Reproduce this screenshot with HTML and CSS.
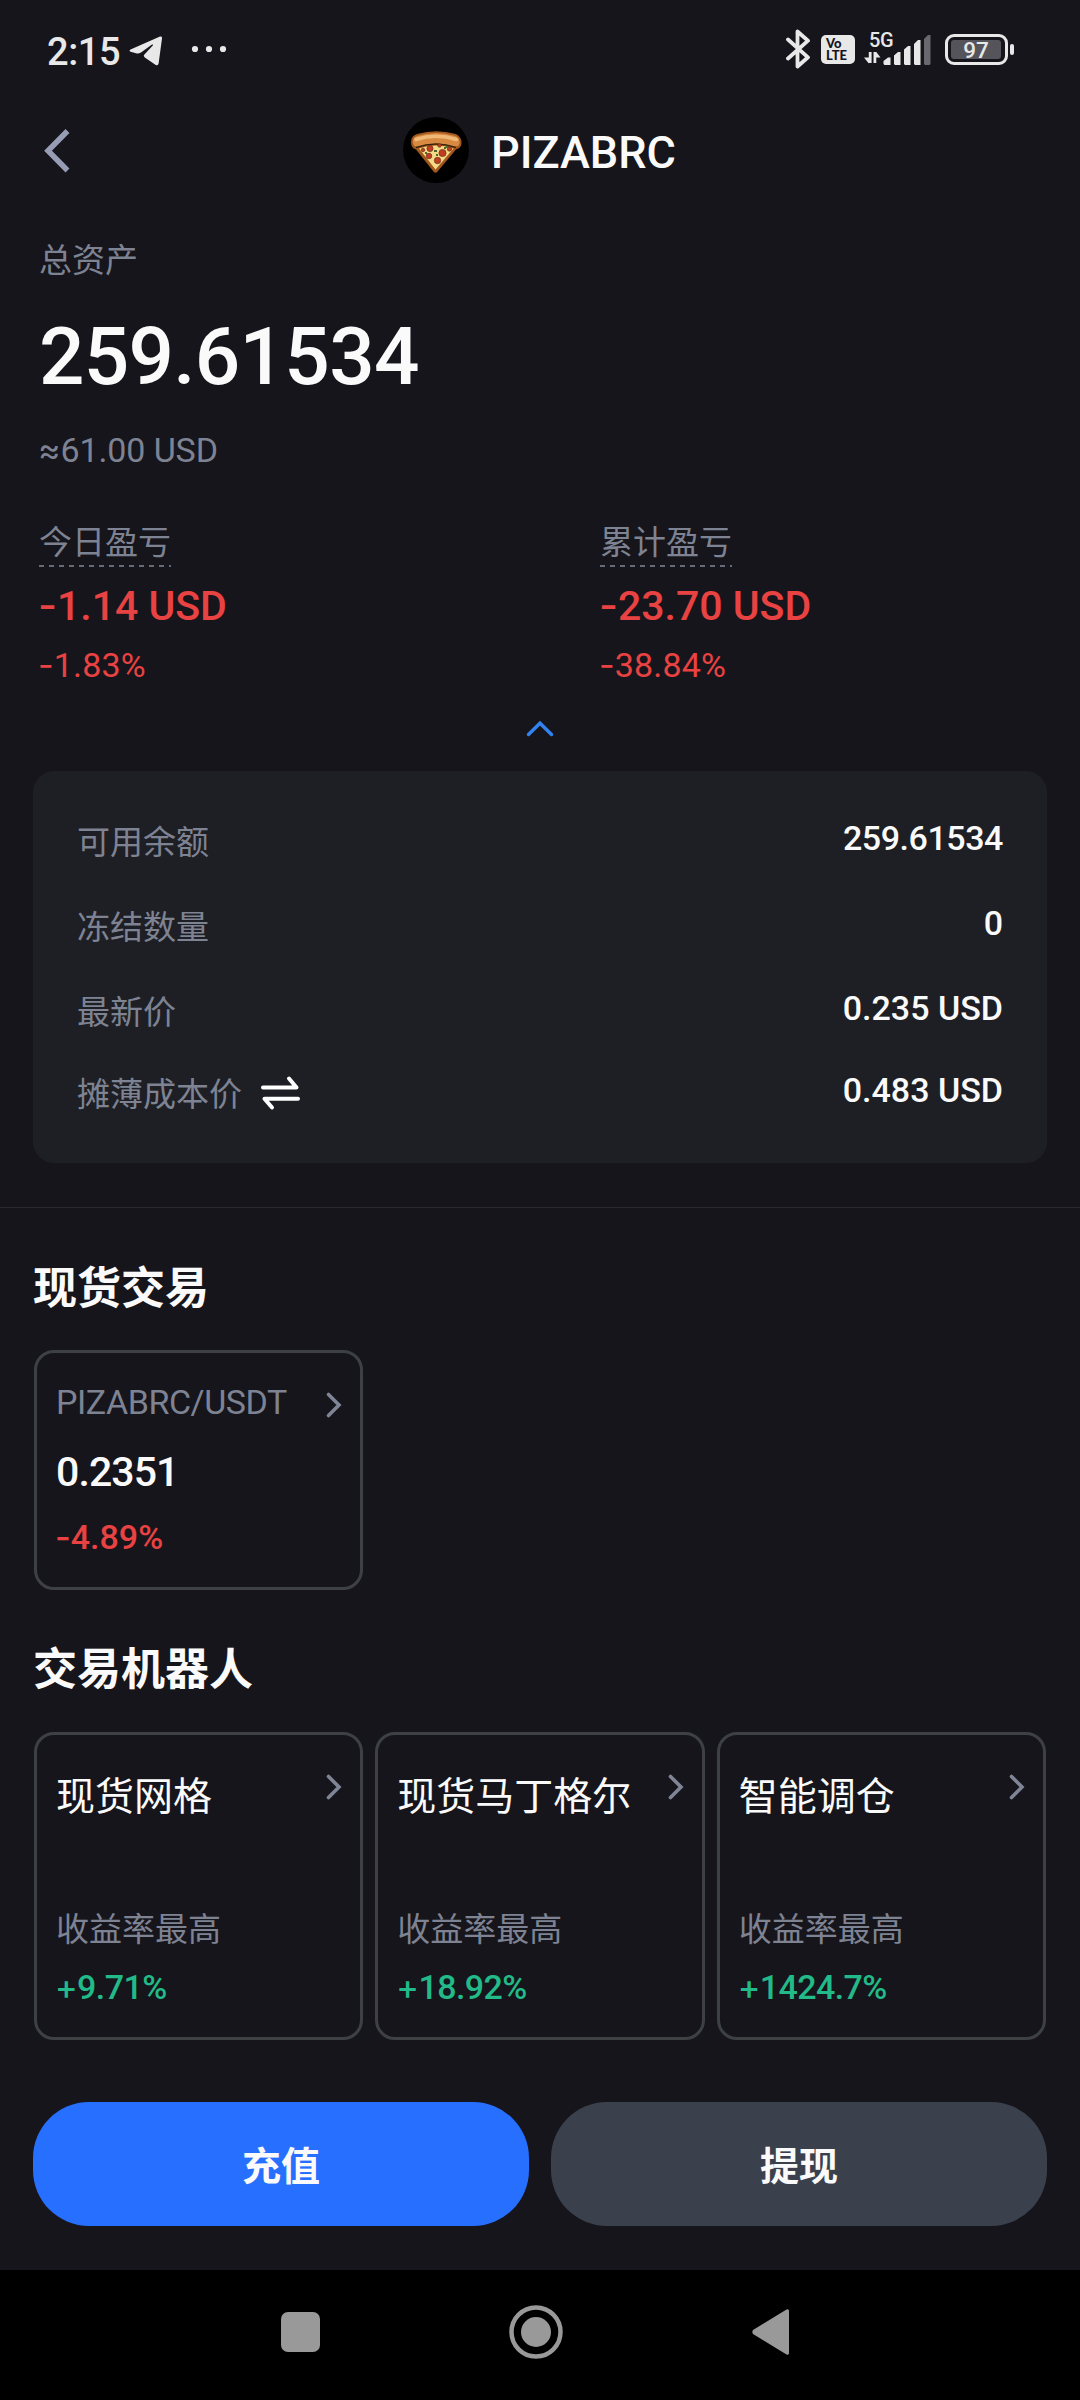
FILE: index.html
```html
<!DOCTYPE html>
<html lang="zh-CN">
<head>
<meta charset="utf-8">
<title>PIZABRC</title>
<link rel="stylesheet" href="styles.css">
</head>
<body>
<div class="screen">
  <div class="status">
    <span class="clock">2:15</span>
    <svg class="telegram" width="34" height="32" viewBox="0 0 34 32"><path d="M1.500 14.600 L31 1.600 Q33.300 1 33 3.400 L29.600 28.500 Q29 31.300 26.400 29.700 L15.800 22.400 Q14 21 15.400 19.500 L24 10.200 Q24.300 9 23 9.600 L12 17.400 Q9.500 19 7 18.200 L1.600 16.800 Q-.4 15.800 1.500 14.600Z"/></svg>
    <svg class="dots" width="36" height="8" viewBox="0 0 36 8"><circle cx="4" cy="4" r="3.100"/><circle cx="18" cy="4" r="3.100"/><circle cx="32" cy="4" r="3.100"/></svg>
    <div class="status-icons">
      <svg width="25" height="40" viewBox="0 0 25 40"><path d="M2 10.500 L22 28.300 L11.500 37.500 V2.500 L22 11.700 L2 29.500" fill="none" stroke="#e8e8e8" stroke-width="3.800" stroke-linejoin="round" stroke-linecap="round"/></svg>
      <div class="volte"><span class="vo">Vo</span><span>LTE</span></div>
      <svg class="signal" width="68" height="44" viewBox="0 -8 68 44">
        <text x="5" y="17" class="net">5G</text>
        <path d="M4.800 22 V33 H7.600 V22Z M0 27.500 L4.800 33.500 V27.500Z M9.500 22 H12.300 V33 H9.500Z M12.300 22 L16.500 27.500 H12.300Z"/>
        <path d="M19.500 34 V31 L24 27.500 H26.500 V35 H20.500Z M30 34 V25.500 L34 22 H36.500 V35 H31Z M40 34 V19.500 L44 16 H46.500 V35 H41Z M50 34 V14 L54 10 H56.500 V35 H51Z"/>
        <path class="dim" d="M60 34 V9 L64 5 H66.500 V34 L65.500 35 H61Z"/>
      </svg>
      <div class="battery"><span class="charge">97</span></div>
      <span class="nub"></span>
    </div>
  </div>

  <header class="header">
    <svg class="back" width="28" height="46" viewBox="0 0 28 46"><path d="M23.500 3 L4 22.800 L23.500 42.500" fill="none" stroke="#979db4" stroke-width="5.500"/></svg>
    <div class="coin">
      <svg width="66" height="66" viewBox="0 0 66 66">
        <circle cx="33" cy="33" r="33" fill="#000"/>
        <path d="M8 25 Q8 19 14 17 Q33 11.500 53 17 Q59 20 58.500 27 Q58 31 53 32.500 L34.500 54.500 Q32.500 57 30.500 54.500 L13 32.500 Q8 31 8 25Z" fill="#a2571c"/>
        <path d="M9.800 24.500 Q10 20 15 18.700 Q33 13.500 52 18.700 Q57 21 56.700 26 Q56 29.500 52 30 Q33 23.500 14.500 30 Q10 29.500 9.800 24.500Z" fill="#d88a43"/>
        <path d="M13 22.500 Q33 16 53.500 22.500" fill="none" stroke="#f0b978" stroke-width="3.500" stroke-linecap="round"/>
        <path d="M16 31.500 Q33 25.500 50.500 31.500 L32.500 52.500Z" fill="#f5da88"/>
        <path d="M13 30.500 Q33 23.500 53 30.500" fill="none" stroke="#38240c" stroke-width="1.400"/>
        <g fill="#bf3d20" stroke="#70301a" stroke-width=".7"><circle cx="27" cy="31.500" r="3.100"/><circle cx="39.500" cy="36" r="3.600"/><circle cx="26" cy="39" r="2.800"/><circle cx="34.500" cy="43.500" r="3.200"/><circle cx="46.500" cy="32" r="2.200"/><circle cx="20" cy="33" r="1.800"/><circle cx="36.500" cy="28.500" r="1.800"/></g>
        <path d="M31 34h3M43 29l2 2M33 38h2M22 36l2 0M41 31l2 0" stroke="#4e672a" stroke-width="1.800"/>
      </svg>
    </div>
    <span class="title">PIZABRC</span>
  </header>

  <section class="summary">
    <div class="label">总资产</div>
    <div class="total">259.61534</div>
    <div class="approx"><span class="sign">≈</span>61.00 USD</div>
    <div class="pnl">
      <div>
        <div class="label dashed">今日盈亏</div>
        <div class="amount red"><span class="sign">-</span>1.14 USD</div>
        <div class="percent red"><span class="sign">-</span>1.83%</div>
      </div>
      <div>
        <div class="label dashed">累计盈亏</div>
        <div class="amount red"><span class="sign">-</span>23.70 USD</div>
        <div class="percent red"><span class="sign">-</span>38.84%</div>
      </div>
    </div>
  </section>
  <svg class="collapse" width="30" height="20" viewBox="0 0 30 20"><path d="M3.500 15.500 L15 4.200 L26.500 15.500" fill="none" stroke="#3283f0" stroke-width="3.400" stroke-linecap="round"/></svg>

  <section class="details">
    <div class="row"><span class="label">可用余额</span><span class="value digits">259.61534</span></div>
    <div class="row"><span class="label">冻结数量</span><span class="value">0</span></div>
    <div class="row"><span class="label">最新价</span><span class="value">0.235 USD</span></div>
    <div class="row last"><span class="label">摊薄成本价</span>
      <svg class="swap" width="40" height="36" viewBox="0 0 40 36"><path d="M3 12.500 H36.500 L29 3.500 M38 23.800 H4.500 L12 32.500" fill="none" stroke="#fff" stroke-width="4" stroke-linecap="round" stroke-linejoin="round"/></svg>
      <span class="value">0.483 USD</span></div>
  </section>

  <section class="spot">
    <h2>现货交易</h2>
    <div class="cards">
      <div class="card">
        <div class="card-head pair"><span>PIZABRC/USDT</span><svg class="more" width="18" height="28" viewBox="0 0 18 28"><path d="M3.500 3.500 L14 14 L3.500 24.500"/></svg></div>
        <div class="price">0.2351</div>
        <div class="change red"><span class="sign">-</span>4.89%</div>
      </div>
    </div>
  </section>

  <section class="bots">
    <h2>交易机器人</h2>
    <div class="cards">
      <div class="card">
        <div class="card-head bot"><span>现货网格</span><svg class="more" width="18" height="28" viewBox="0 0 18 28"><path d="M3.500 3.500 L14 14 L3.500 24.500"/></svg></div>
        <div class="label best">收益率最高</div>
        <div class="change green"><span class="sign">+</span>9.71%</div>
      </div>
      <div class="card">
        <div class="card-head bot"><span>现货马丁格尔</span><svg class="more" width="18" height="28" viewBox="0 0 18 28"><path d="M3.500 3.500 L14 14 L3.500 24.500"/></svg></div>
        <div class="label best">收益率最高</div>
        <div class="change green"><span class="sign">+</span>18.92%</div>
      </div>
      <div class="card">
        <div class="card-head bot"><span>智能调仓</span><svg class="more" width="18" height="28" viewBox="0 0 18 28"><path d="M3.500 3.500 L14 14 L3.500 24.500"/></svg></div>
        <div class="label best">收益率最高</div>
        <div class="change green"><span class="sign">+</span>1424.7%</div>
      </div>
    </div>
  </section>

  <div class="actions">
    <div class="button primary">充值</div>
    <div class="button">提现</div>
  </div>

  <nav class="navbar">
    <span class="recent"></span>
    <svg class="home" width="54" height="54" viewBox="0 0 54 54"><circle cx="27" cy="27" r="24.500" fill="none" stroke="#999" stroke-width="4.500"/><circle cx="27" cy="27" r="15" fill="#999"/></svg>
    <svg class="prev" width="37" height="48" viewBox="0 0 37 48"><path d="M1 22 Q-.3 24 1 26 L34.500 46.500 Q37 47.500 37 45 V3 Q37 .5 34.500 1.500Z" fill="#999"/></svg>
  </nav>
</div>
</body>
</html>
```
FILE: styles.css
```css
* { box-sizing: border-box; }
body {
  margin: 0;
  background: #16151b;
  color: #fafafa;
  font-family: Roboto, "Noto Sans CJK SC", sans-serif;
}
svg { display: block; flex: none; }
.screen {
  width: 1080px;
  height: 2400px;
  display: flex;
  flex-direction: column;
}

/* status bar */
.status {
  height: 100px;
  padding: 0 66px 0 47px;
  display: flex;
  align-items: flex-start;
  color: #e8e8e8;
  fill: #e8e8e8;
}
.clock { width: 82px; margin-top: 29px; font-size: 38px; line-height: 46px; font-weight: 500; letter-spacing: -.4px; }
.telegram { margin-top: 35px; }
.dots { margin: 45px 0 0 28px; }
.status-icons { display: flex; margin-left: auto; }
.status-icons > svg:first-child { margin-top: 29px; }
.volte {
  width: 34px;
  height: 29px;
  margin: 35px 9px 0 10px;
  padding: 2px 0 0 5px;
  border-radius: 5px;
  background: #e8e8e8;
  color: #16151b;
  font: 900 13px/12px Lato, sans-serif;
  display: flex;
  flex-direction: column;
}
.signal { margin-top: 22px; }
.net { font: 500 20px Roboto, sans-serif; letter-spacing: -.3px; }
.dim { fill: #69686d; }
.battery {
  width: 63px;
  height: 31px;
  margin: 34px 2px 0 13px;
  padding: 3px 4px 3px 3px;
  border: 3px solid #e8e8e8;
  border-radius: 9px;
  display: flex;
}
.charge {
  flex: 1;
  border-radius: 3px;
  background: #55545a;
  font-size: 22.500px;
  font-weight: 500;
  line-height: 20px;
  text-align: center;
}
.nub { width: 4px; height: 11px; margin-top: 44px; border-radius: 2px; background: #e8e8e8; }

/* page header */
.header { height: 100px; display: flex; padding-left: 44px; }
.back { margin-top: 28px; }
.coin { margin: 17px 0 0 331px; }
.title { margin: 28px 0 0 22px; font-size: 45px; line-height: 50px; font-weight: 500; }

/* totals */
.summary { padding: 41px 0 0 39px; }
.label { color: #7e8393; font-size: 33px; line-height: 40px; }
.total { margin-top: 31px; font-size: 80px; line-height: 90px; font-weight: 500; letter-spacing: -.7px; }
.approx { margin-top: 28px; color: #7e8393; font-size: 34px; line-height: 40px; letter-spacing: -.1px; }
.sign { font-family: Inter, sans-serif; margin-left: -1px; }
.pnl { margin-top: 53px; display: grid; grid-template-columns: 561px 1fr; }
.dashed {
  width: 132px;
  height: 44px;
  background: repeating-linear-gradient(90deg, #666b7a 0 5px, transparent 5px 10px) 0 100% / 100% 2px no-repeat;
}
.amount { margin-top: 13px; font-size: 41px; line-height: 50px; font-weight: 500; }
.percent { margin-top: 14px; font-size: 34px; line-height: 40px; letter-spacing: .15px; }
.red { color: #e94242; }
.green { color: #21ba88; }
.collapse { margin: 34px auto 0; }

/* balance details */
.details {
  height: 392px;
  margin: 32px 33px 0;
  padding: 50px 44px 0;
  border-radius: 21px;
  background: #1e1f24;
}
.row { height: 85px; display: flex; }
.row .label { margin-top: 2px; }
.last { margin-top: -3px; }
.value { margin-left: auto; font-size: 34px; line-height: 34px; font-weight: 500; }
.digits { letter-spacing: -.45px; }
.swap { margin: 2px 0 0 18px; }

/* markets */
h2 { margin: 0; font-size: 44px; line-height: 50px; font-weight: 700; }
.spot { margin-top: 44px; padding: 56px 33px 0; border-top: 1px solid #29292f; }
.cards { margin-top: 36px; padding: 0 1px; display: grid; grid-template-columns: repeat(3, 1fr); gap: 12px; }
.card { height: 240px; padding: 0 17px 0 19px; border: 3px solid #3e4144; border-radius: 20px; }
.card-head { display: flex; justify-content: space-between; line-height: 40px; }
.pair { padding-top: 29px; color: #7e8393; font-size: 34px; letter-spacing: -.45px; }
.more { fill: none; stroke: #7f8496; stroke-width: 3.600; stroke-linecap: round; }
.pair .more { margin-top: 9px; }
.price { margin-top: 25px; font-size: 41px; line-height: 50px; font-weight: 500; letter-spacing: -.9px; }
.change { margin-top: 20px; font-size: 34px; line-height: 40px; font-weight: 500; }
.bots { padding: 55px 33px 0; }
.bots .cards { margin-top: 37px; }
.bots .card { height: 308px; }
.bot { padding-top: 37px; font-size: 39px; line-height: 50px; }
.bot .more { margin-top: 1px; }
.best { margin-top: 88px; }
.bots .change { margin-top: 17px; letter-spacing: -.6px; }

/* bottom actions */
.actions { margin: 62px 33px 0; display: flex; gap: 22px; }
.button {
  flex: 1;
  height: 124px;
  padding-top: 40px;
  border-radius: 56px;
  background: #3b404d;
  font-size: 39px;
  line-height: 50px;
  font-weight: 700;
  text-align: center;
}
.primary { background: #2770ff; }

.navbar {
  height: 130px;
  margin-top: auto;
  padding-left: 281px;
  display: flex;
  align-items: flex-start;
  background: #000;
}
.recent { width: 39px; height: 40px; margin-top: 42px; border-radius: 7px; background: #999; }
.home { margin: 35px 0 0 189px; }
.prev { margin: 38px 0 0 189px; }
```
